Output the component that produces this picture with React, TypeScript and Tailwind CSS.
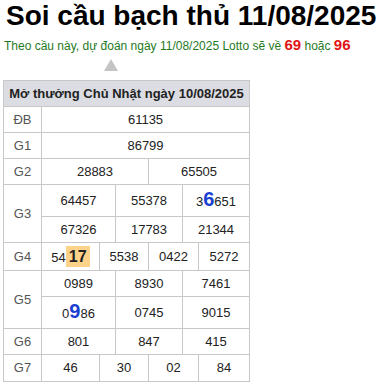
import type { ReactNode } from 'react';

const font = { fontFamily: '"Liberation Sans", Arial, sans-serif' };

const Hot = ({ children }: { children: ReactNode }) => (
  <span className="text-[20px] font-bold leading-none text-[#1a3fd1]">{children}</span>
);

const Mark = ({ children }: { children: ReactNode }) => (
  <span className="inline-block bg-[#fdd38a] px-[3px] text-[16px] font-bold leading-[21px]">
    {children}
  </span>
);

interface Cell {
  w: string;
  v: ReactNode;
}

const Row = ({ h, cells }: { h: string; cells: Cell[] }) => (
  <div className={`flex ${h}`}>
    {cells.map((c, i) => (
      <div
        key={i}
        className={`${c.w} flex items-center justify-center border-r border-b border-[#c8c8c8]`}
      >
        {c.v}
      </div>
    ))}
  </div>
);

const Prize = ({ label, rows }: { label: string; rows: { h: string; cells: Cell[] }[] }) => (
  <div className="flex">
    <div className="w-[38px] flex items-center justify-center border-r border-b border-[#c8c8c8] text-[#555]">
      {label}
    </div>
    <div className="w-[208px] flex flex-col">
      {rows.map((r, i) => (
        <Row key={i} h={r.h} cells={r.cells} />
      ))}
    </div>
  </div>
);

const three = (a: ReactNode, b: ReactNode, c: ReactNode): Cell[] => [
  { w: 'w-[74px]', v: a },
  { w: 'w-[67px]', v: b },
  { w: 'w-[67px]', v: c },
];

const four = (a: ReactNode, b: ReactNode, c: ReactNode, d: ReactNode): Cell[] => [
  { w: 'w-[58px]', v: a },
  { w: 'w-[49px]', v: b },
  { w: 'w-[50px]', v: c },
  { w: 'w-[51px]', v: d },
];

export default function App() {
  return (
    <div className="w-[386px] h-[387px] bg-white text-[#222]" style={font}>
      <h1 className="pl-[6px] text-[28px] font-bold leading-[32px] text-black">
        Soi cầu bạch thủ 11/08/2025
      </h1>
      <p className="mt-[4px] pl-[4px] text-[12px] leading-[18px] text-[#1f7a1f]">
        Theo cầu này, dự đoán ngày 11/08/2025 Lotto sẽ về{' '}
        <span className="text-[15px] font-bold text-[#e01414]">69</span> hoặc{' '}
        <span className="text-[15px] font-bold text-[#e01414]">96</span>
      </p>
      <div className="ml-[104px] mt-[4px] h-0 w-0 border-x-[7px] border-b-[12px] border-x-transparent border-b-[#c4c4c4]" />

      <div className="ml-[3px] mt-[9px] w-[247px] border-l border-t border-[#c8c8c8] text-[13px]">
        <div className="flex h-[26px] items-center justify-center border-r border-b border-[#c8c8c8] bg-[#dcdde2] font-bold">
          Mở thưởng Chủ Nhật ngày 10/08/2025
        </div>
        <Prize label="ĐB" rows={[{ h: 'h-[26px]', cells: [{ w: 'w-[208px]', v: '61135' }] }]} />
        <Prize label="G1" rows={[{ h: 'h-[26px]', cells: [{ w: 'w-[208px]', v: '86799' }] }]} />
        <Prize
          label="G2"
          rows={[
            {
              h: 'h-[26px]',
              cells: [
                { w: 'w-[107px]', v: '28883' },
                { w: 'w-[101px]', v: '65505' },
              ],
            },
          ]}
        />
        <Prize
          label="G3"
          rows={[
            { h: 'h-[32px]', cells: three('64457', '55378', <span>3<Hot>6</Hot>651</span>) },
            { h: 'h-[26px]', cells: three('67326', '17783', '21344') },
          ]}
        />
        <Prize
          label="G4"
          rows={[{ h: 'h-[28px]', cells: four(<span>54<Mark>17</Mark></span>, '5538', '0422', '5272') }]}
        />
        <Prize
          label="G5"
          rows={[
            { h: 'h-[26px]', cells: three('0989', '8930', '7461') },
            { h: 'h-[32px]', cells: three(<span>0<Hot>9</Hot>86</span>, '0745', '9015') },
          ]}
        />
        <Prize label="G6" rows={[{ h: 'h-[26px]', cells: three('801', '847', '415') }]} />
        <Prize label="G7" rows={[{ h: 'h-[27px]', cells: four('46', '30', '02', '84') }]} />
      </div>
    </div>
  );
}
